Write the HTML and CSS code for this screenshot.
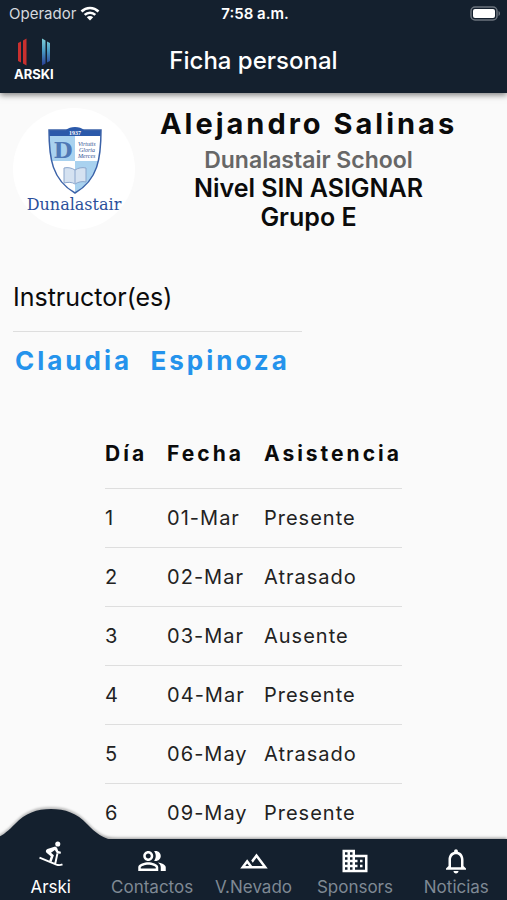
FILE: index.html
```html
<!DOCTYPE html>
<html lang="es">

<head>
    <meta charset="UTF-8">
    <meta name="viewport" content="width=device-width, initial-scale=1.0">
    <title>Ficha personal</title>
    <link rel="stylesheet" href="styles.css">
</head>

<body>
    <!-- Encabezado -->
    <header class="header">
        <div class="status-bar">
            <div class="carrier">
                <span>Operador</span>
                <svg class="wifi" viewBox="0 0 20 15" aria-hidden="true">
                    <path d="M1.5 5.5a12.2 12.2 0 0 1 17 0M4.7 8.9a7.6 7.6 0 0 1 10.6 0" fill="none" stroke="currentColor" stroke-width="2.6" />
                    <path d="M10 14.5l-3.2-3.3a4.6 4.6 0 0 1 6.4 0z" fill="currentColor" />
                </svg>
            </div>
            <div class="clock">7:58 a.m.</div>
            <div class="battery">
                <svg viewBox="0 0 31 15" aria-hidden="true">
                    <rect x="1" y="1" width="26" height="13" rx="4" fill="none" stroke="#6b737d" stroke-width="1.5" />
                    <rect x="3" y="3" width="22" height="9" rx="2" fill="#fff" />
                    <path d="M28.5 5c2 .8 2 4.2 0 5z" fill="#6b737d" />
                </svg>
            </div>
        </div>
        <div class="app-bar">
            <a class="brand" href="#" aria-label="Arski">
                <svg viewBox="0 0 34 28" aria-hidden="true">
                    <defs>
                        <linearGradient id="ice" x1="0" y1="0" x2="0" y2="1">
                            <stop offset="0" stop-color="#7fd0d8" />
                            <stop offset=".45" stop-color="#4a9cc4" />
                            <stop offset="1" stop-color="#283c94" />
                        </linearGradient>
                    </defs>
                    <path d="M1 5l3-1.500v21l-3-1.500zM6 2.500l3.500-2v27l-3.500-2z" fill="#c9302f" />
                    <path d="M25 .5l3.500 2v23l-3.500 2zM30 3.500l3 1.500v18l-3 1.500z" fill="url(#ice)" />
                </svg>
                <span>ARSKI</span>
            </a>
            <h1>Ficha personal</h1>
        </div>
    </header>

    <main class="content">
        <!-- Datos del alumno -->
        <section class="profile">
            <svg class="avatar" viewBox="0 0 122 122" role="img" aria-label="Dunalastair">
                <circle cx="61" cy="61" r="61" fill="#fff" />
                <clipPath id="shield">
                    <path d="M36 22h52c0 28-3 50-26 63-23-13-26-35-26-63z" />
                </clipPath>
                <g clip-path="url(#shield)">
                    <path d="M34 20h56v68H34z" fill="#fff" />
                    <path d="M34 20h28v33H34zM62 53h28v34H62z" fill="#a9d2ef" />
                    <path d="M34 20h56v8H34z" fill="#2b59aa" />
                </g>
                <path d="M36 22h52c0 28-3 50-26 63-23-13-26-35-26-63z" fill="none" stroke="#3b62a8" stroke-width="1.5" />
                <path d="M53 22c4-4 14-4 18 0v5H53z" fill="#2b59aa" />
                <path d="M51 60c4-1 8 0 11 2 3-2 7-3 11-2v14c-4-1-8 0-11 2-3-2-7-2-11-1z" fill="#d5e2f1" stroke="#8ba6cc" />
                <path d="M62 62v13" stroke="#8ba6cc" />
                <text class="crest-year" x="62" y="27">1937</text>
                <text class="crest-letter" x="50" y="50">D</text>
                <text class="crest-motto" x="65" y="38">Virtutis</text>
                <text class="crest-motto" x="66" y="44">Gloria</text>
                <text class="crest-motto" x="65" y="50">Merces</text>
                <text class="crest-name" x="61" y="102">Dunalastair</text>
            </svg>
            <div class="profile-data">
                <h2>Alejandro Salinas</h2>
                <p class="school">Dunalastair School</p>
                <p class="level">Nivel SIN ASIGNAR</p>
                <p class="level">Grupo E</p>
            </div>
        </section>

        <!-- Instructores -->
        <section class="instructors">
            <h3>Instructor(es)</h3>
            <a class="instructor" href="#">Claudia&nbsp; Espinoza</a>
        </section>

        <!-- Asistencia -->
        <table class="attendance">
            <thead>
                <tr>
                    <th>Día</th>
                    <th>Fecha</th>
                    <th>Asistencia</th>
                </tr>
            </thead>
            <tbody>
                <tr>
                    <td>1</td>
                    <td>01-Mar</td>
                    <td>Presente</td>
                </tr>
                <tr>
                    <td>2</td>
                    <td>02-Mar</td>
                    <td>Atrasado</td>
                </tr>
                <tr>
                    <td>3</td>
                    <td>03-Mar</td>
                    <td>Ausente</td>
                </tr>
                <tr>
                    <td>4</td>
                    <td>04-Mar</td>
                    <td>Presente</td>
                </tr>
                <tr>
                    <td>5</td>
                    <td>06-May</td>
                    <td>Atrasado</td>
                </tr>
                <tr>
                    <td>6</td>
                    <td>09-May</td>
                    <td>Presente</td>
                </tr>
            </tbody>
        </table>
    </main>

    <!-- Menú inferior -->
    <nav class="tab-bar">
        <a class="tab active" href="#">
            <svg class="hump" viewBox="0 0 132 32" aria-hidden="true">
                <path d="M0 32C14 32 22 24 30 16C40 5 52 1 66 1S92 5 102 16C110 24 118 32 132 32z" fill="currentColor" />
            </svg>
            <svg class="icon" viewBox="0 0 24 24" aria-hidden="true">
                <circle cx="17.6" cy="4.2" r="2.1" />
                <path d="M15.500 6.200L9 8.300c-1.300.6-1.700 2-.7 3l3.500 3-1.300 4 1.900.8 2-5.600-2.400-2.200 3.200-2.200 1.800 2.800 3 .3.200-1.700-2.200-.5-1-2.800z" />
                <path d="M17.300 12l-1.800 8.500M2.500 15.500l14 5.700q2.500.9 5-.2" fill="none" stroke="currentColor" stroke-width="1.600" />
            </svg>
            <span>Arski</span>
        </a>
        <a class="tab" href="#">
            <svg class="icon" viewBox="0 0 24 24" aria-hidden="true">
                <path d="M16.670 13.130C18.040 14.060 19 15.320 19 17v3h4v-3c0-2.180-3.570-3.470-6.330-3.870zM15 12c2.210 0 4-1.790 4-4s-1.790-4-4-4c-.47 0-.91.1-1.330.24C14.500 5.270 15 6.580 15 8s-.5 2.730-1.330 3.760c.42.14.86.24 1.330.24zM9 12c2.210 0 4-1.790 4-4s-1.790-4-4-4-4 1.790-4 4 1.790 4 4 4zm0-6c1.100 0 2 .9 2 2s-.9 2-2 2-2-.9-2-2 .9-2 2-2zm0 7c-2.670 0-8 1.340-8 4v3h16v-3c0-2.660-5.330-4-8-4zm6 5H3v-.99C3.200 16.290 6.300 15 9 15s5.800 1.290 6 2v1z" />
            </svg>
            <span>Contactos</span>
        </a>
        <a class="tab" href="#">
            <svg class="icon" viewBox="0 0 24 24" aria-hidden="true">
                <path d="M14 6l-4.220 5.630 1.250 1.670L14 9.330 19 16h-8.460l-4.010-5.370L1 18h22L14 6zM5 16l1.520-2.030L8.040 16H5z" />
            </svg>
            <span>V.Nevado</span>
        </a>
        <a class="tab" href="#">
            <svg class="icon" viewBox="0 0 24 24" aria-hidden="true">
                <path d="M12 7V3H2v18h20V7H12zM6 19H4v-2h2v2zm0-4H4v-2h2v2zm0-4H4V9h2v2zm0-4H4V5h2v2zm4 12H8v-2h2v2zm0-4H8v-2h2v2zm0-4H8V9h2v2zm0-4H8V5h2v2zm10 12h-8v-2h2v-2h-2v-2h2v-2h-2V9h8v10zm-2-8h-2v2h2v-2zm0 4h-2v2h2v-2z" />
            </svg>
            <span>Sponsors</span>
        </a>
        <a class="tab" href="#">
            <svg class="icon" viewBox="0 0 24 24" aria-hidden="true">
                <path d="M12 22c1.100 0 2-.9 2-2h-4c0 1.100.9 2 2 2zm6-6v-5c0-3.070-1.630-5.640-4.500-6.320V4c0-.83-.67-1.500-1.500-1.500s-1.500.67-1.500 1.500v.68C7.640 5.360 6 7.920 6 11v5l-2 2v1h16v-1l-2-2zm-2 1H8v-6c0-2.480 1.510-4.500 4-4.500s4 2.020 4 4.500v6z" />
            </svg>
            <span>Noticias</span>
        </a>
    </nav>
</body>

</html>
```

FILE: styles.css
```css
* {
    box-sizing: border-box;
}

body {
    font-family: Inter, "Liberation Sans", sans-serif;
    display: flex;
    flex-direction: column;
    height: 100vh;
    margin: 0;
    background-color: #fafafa;
    color: #0b0b0b;
}

h1,
h2,
h3,
p {
    margin: 0;
}

a {
    color: inherit;
    text-decoration: none;
}

.header {
    position: relative;
    z-index: 1;
    background-color: #14202e;
    color: white;
    box-shadow: 0 2px 6px rgba(0, 0, 0, 0.5);
}

.status-bar {
    display: grid;
    grid-template-columns: 1fr auto 1fr;
    align-items: center;
    height: 27px;
    padding: 0 6px 0 9px;
    font-size: 15px;
}

.carrier {
    display: flex;
    align-items: center;
    gap: 4px;
    color: #d5d9de;
}

.wifi {
    width: 20px;
    height: 15px;
    color: white;
}

.clock {
    font-weight: 600;
}

.battery {
    display: flex;
    justify-content: flex-end;
}

.battery svg {
    width: 31px;
    height: 15px;
}

.app-bar {
    display: grid;
    grid-template-columns: 1fr auto 1fr;
    align-items: center;
    height: 66px;
    padding: 0 14px;
}

.brand {
    display: flex;
    flex-direction: column;
    align-items: center;
    justify-self: start;
    font-size: 13px;
    font-weight: 700;
    line-height: 16px;
}

.brand svg {
    width: 34px;
    height: 28px;
}

h1 {
    font-size: 24px;
    font-weight: 500;
}

.content {
    flex: 1;
    min-height: 0;
    overflow-y: auto;
    padding: 15px 13px 0;
    scrollbar-width: none;
}

.profile {
    display: flex;
}

.avatar {
    flex: none;
    width: 122px;
    height: 122px;
}

.crest-year {
    font: bold 6px "Liberation Serif", serif;
    fill: white;
    text-anchor: middle;
}

.crest-letter {
    font: bold 22px "DejaVu Serif", serif;
    fill: #4f78b5;
    text-anchor: middle;
}

.crest-motto {
    font: italic 6px "Liberation Serif", serif;
    fill: #2f4f92;
}

.crest-name {
    font: 16px "DejaVu Serif", serif;
    fill: #2b509b;
    text-anchor: middle;
}

.profile-data {
    flex: 1;
    padding-right: 12px;
    text-align: center;
    white-space: nowrap;
}

h2 {
    font-size: 29px;
    font-weight: 700;
    letter-spacing: 3px;
    line-height: 32px;
}

.school {
    margin-top: 6px;
    font-size: 23px;
    font-weight: 600;
    line-height: 28px;
    color: #676767;
}

.level {
    font-size: 25px;
    font-weight: 600;
    line-height: 29px;
}

.instructors {
    width: 60%;
    margin-top: 49px;
}

h3 {
    padding-bottom: 18px;
    border-bottom: 1px solid #dedede;
    font-size: 25px;
    font-weight: 400;
    line-height: 32px;
}

.instructor {
    display: block;
    padding: 13px 0 0 2px;
    font-size: 26px;
    font-weight: 700;
    letter-spacing: 3px;
    line-height: 32px;
    white-space: nowrap;
    color: #2493ec;
}

.attendance {
    margin: 43px auto 0;
    border-collapse: collapse;
    text-align: left;
    white-space: nowrap;
}

.attendance th {
    height: 68px;
    padding: 0 20px 0 0;
    font-size: 21px;
    font-weight: 700;
    letter-spacing: 3px;
}

.attendance td {
    height: 59px;
    padding: 0 16px 0 0;
    border-top: 1px solid #dedede;
    font-size: 20px;
    letter-spacing: 1px;
    color: #222;
}

.attendance th:last-child,
.attendance td:last-child {
    padding-right: 0;
}

.tab-bar {
    position: relative;
    display: flex;
    height: 61px;
    background-color: #14202e;
    box-shadow: 0 -1px 3px rgba(0, 0, 0, 0.4);
}

.tab {
    position: relative;
    flex: 1;
    display: flex;
    flex-direction: column;
    align-items: center;
    justify-content: flex-end;
    padding-bottom: 2px;
    font-size: 17px;
    line-height: 22px;
    color: #7f8994;
}

.tab.active {
    color: white;
}

.icon {
    width: 30px;
    height: 30px;
    color: white;
    fill: currentColor;
}

.tab.active .icon {
    position: relative;
    margin-bottom: 8px;
}

.hump {
    position: absolute;
    bottom: 60px;
    left: 50%;
    width: 132px;
    height: 32px;
    margin-left: -66px;
    color: #14202e;
    filter: drop-shadow(0 -2px 1px rgba(0, 0, 0, 0.25));
}
```
